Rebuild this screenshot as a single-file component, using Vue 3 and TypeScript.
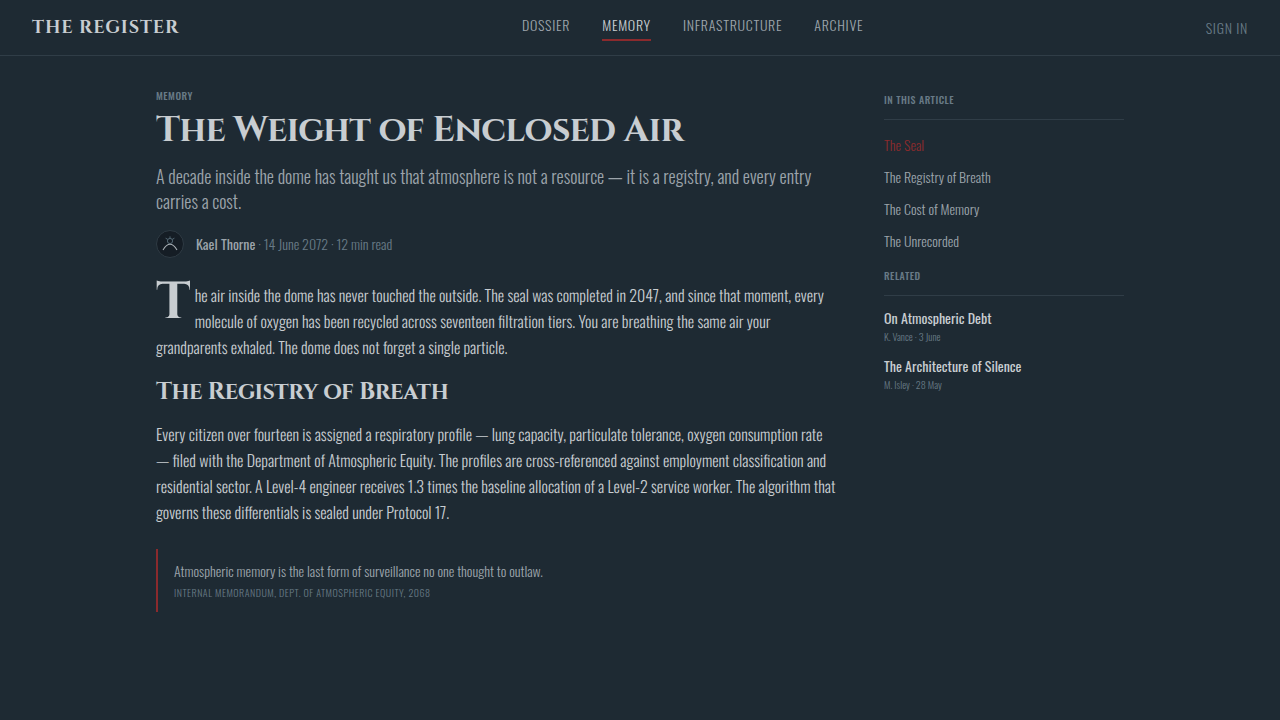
<script setup lang="ts">
import { ref } from 'vue'

interface NavItem { id: string; label: string }
interface RelatedItem { title: string; meta: string }

const navItems: NavItem[] = [
  { id: 'dossier', label: 'Dossier' },
  { id: 'memory', label: 'Memory' },
  { id: 'infrastructure', label: 'Infrastructure' },
  { id: 'archive', label: 'Archive' },
]
const sections: NavItem[] = [
  { id: 'seal', label: 'The Seal' },
  { id: 'registry', label: 'The Registry of Breath' },
  { id: 'cost', label: 'The Cost of Memory' },
  { id: 'unrecorded', label: 'The Unrecorded' },
]
const related: RelatedItem[] = [
  { title: 'On Atmospheric Debt', meta: 'K. Vance · 3 June' },
  { title: 'The Architecture of Silence', meta: 'M. Isley · 28 May' },
]
const activeNav = ref('memory')
const activeSection = ref('seal')
</script>

<template>
  <div class="page">
    <header class="topbar">
      <a class="brand" href="#">THE REGISTER</a>
      <nav class="nav" aria-label="Main">
        <a
          v-for="item in navItems"
          :key="item.id"
          :href="`#${item.id}`"
          class="nav-link"
          :class="{ active: item.id === activeNav }"
          @click="activeNav = item.id"
        >{{ item.label }}</a>
      </nav>
      <button type="button" class="sign-in">Sign in</button>
    </header>

    <div class="layout">
      <main class="article">
        <p class="eyebrow">Memory</p>
        <h1 class="title">The Weight of Enclosed Air</h1>
        <p class="deck">A decade inside the dome has taught us that atmosphere is not a resource — it is a registry, and every entry carries a cost.</p>
        <div class="byline">
          <svg class="avatar" viewBox="0 0 28 28" aria-hidden="true">
            <circle cx="14" cy="14" r="13.5" fill="#151d25" stroke="#2f3b44" />
            <g fill="none" stroke="#526672" stroke-width="1">
              <circle cx="14" cy="11" r="2.6" />
              <path d="M14 8.4V6.4M11.8 9.4L9.6 8.2M16.2 9.4L18.4 8.2" />
            </g>
            <path d="M7 20Q14 8.6 21 20" fill="none" stroke="#a9b0b5" stroke-width="1.1" />
          </svg>
          <p class="meta"><strong>Kael Thorne</strong> · 14 June 2072 · 12 min read</p>
        </div>
        <p class="body lead" id="seal">The air inside the dome has never touched the outside. The seal was completed in 2047, and since that moment, every molecule of oxygen has been recycled across seventeen filtration tiers. You are breathing the same air your grandparents exhaled. The dome does not forget a single particle.</p>
        <h2 class="subtitle" id="registry">The Registry of Breath</h2>
        <p class="body">Every citizen over fourteen is assigned a respiratory profile — lung capacity, particulate tolerance, oxygen consumption rate — filed with the Department of Atmospheric Equity. The profiles are cross-referenced against employment classification and residential sector. A Level-4 engineer receives 1.3 times the baseline allocation of a Level-2 service worker. The algorithm that governs these differentials is sealed under Protocol 17.</p>
        <blockquote class="quote">
          <p class="quote-text">Atmospheric memory is the last form of surveillance no one thought to outlaw.</p>
          <cite class="quote-source">Internal Memorandum, Dept. of Atmospheric Equity, 2068</cite>
        </blockquote>
      </main>

      <aside class="sidebar">
        <nav aria-labelledby="toc-heading">
          <h3 id="toc-heading" class="side-heading">In this article</h3>
          <ul class="toc">
            <li v-for="section in sections" :key="section.id">
              <a
                :href="`#${section.id}`"
                class="toc-link"
                :class="{ active: section.id === activeSection }"
                @click="activeSection = section.id"
              >{{ section.label }}</a>
            </li>
          </ul>
        </nav>
        <section aria-labelledby="related-heading">
          <h3 id="related-heading" class="side-heading">Related</h3>
          <ul class="related">
            <li v-for="item in related" :key="item.title">
              <a href="#" class="related-title">{{ item.title }}</a>
              <p class="related-meta">{{ item.meta }}</p>
            </li>
          </ul>
        </section>
      </aside>
    </div>
  </div>
</template>

<style>
body { margin: 0; background: #1e2a33; }
</style>

<style scoped>
.page {
  --sans: Oswald, "Liberation Sans Narrow", "Roboto Condensed", "Liberation Sans", sans-serif;
  --serif: Cinzel, "Liberation Serif", serif;
  --bright: #c8cdd1;
  --soft: #9ca4ab;
  --muted: #687a86;
  --line: #303d47;
  --accent: #8b2a2d;
  min-height: 100vh;
  background: #1e2a33;
  color: var(--bright);
  font-family: var(--sans);
  font-weight: 300;
  font-size: 16px;
}
p, h1, h2, h3, ul, blockquote { margin: 0; padding: 0; }
ul { list-style: none; }
a { color: inherit; text-decoration: none; }
.topbar {
  display: flex;
  justify-content: space-between;
  align-items: center;
  height: 55px;
  padding: 0 32px;
  border-bottom: 1px solid var(--line);
}
.brand { font-family: var(--serif); font-size: 18px; font-weight: 600; letter-spacing: 0.05em; }
.nav { display: flex; gap: 32px; }
.nav-link {
  padding-bottom: 4px;
  border-bottom: 2px solid transparent;
  color: var(--soft);
  font-size: 14px;
  line-height: 21px;
  letter-spacing: 0.05em;
  text-transform: uppercase;
}
.nav-link.active { color: var(--bright); border-color: var(--accent); }
.sign-in {
  padding: 0;
  border: 0;
  background: none;
  color: var(--muted);
  font: inherit;
  font-size: 14px;
  letter-spacing: 0.05em;
  text-transform: uppercase;
  cursor: pointer;
}
.layout {
  display: grid;
  grid-template-columns: minmax(0, 680px) 240px;
  gap: 48px;
  justify-content: center;
  padding: 32px;
}
.eyebrow, .side-heading {
  color: var(--muted);
  font-size: 10px;
  font-weight: 500;
  line-height: 16px;
  letter-spacing: 0.05em;
  text-transform: uppercase;
}
.title { margin-top: 2px; font-family: var(--serif); font-size: 36px; font-weight: 700; line-height: 48px; letter-spacing: -0.02em; }
.deck { margin-top: 10px; color: var(--soft); font-size: 18px; line-height: 25px; }
.byline { display: flex; align-items: center; gap: 12px; margin-top: 16px; }
.avatar { width: 28px; height: 28px; }
.meta { color: var(--muted); font-size: 14px; line-height: 20px; }
.meta strong { color: var(--soft); font-weight: 400; }
.body { line-height: 26px; text-rendering: geometricPrecision; }
.lead { margin-top: 24px; }
.lead::first-letter {
  float: left;
  margin-right: 4px;
  font-family: var(--serif);
  font-size: 52px;
  font-weight: 600;
  line-height: 42px;
}
.subtitle { margin: 16px 0 13px; font-family: var(--serif); font-size: 24px; font-weight: 600; line-height: 32px; letter-spacing: -0.02em; }
.quote { margin-top: 24px; padding: 12px 16px; border-left: 2px solid var(--accent); }
.quote-text { color: var(--soft); font-size: 14px; line-height: 20px; }
.quote-source { display: block; margin-top: 4px; color: var(--muted); font-size: 10px; font-style: normal; line-height: 15px; letter-spacing: 0.05em; text-transform: uppercase; }
.sidebar { padding-top: 4px; }
.side-heading { padding-bottom: 11px; border-bottom: 1px solid var(--line); }
.toc { padding: 9px 0 11px; }
.toc-link { display: block; color: var(--soft); font-size: 14px; line-height: 32px; }
.toc-link.active { color: var(--accent); }
.related { display: grid; gap: 10px; padding-top: 11px; }
.related-title { display: block; font-size: 14px; font-weight: 400; line-height: 22px; }
.related-meta { color: var(--muted); font-size: 10px; line-height: 16px; }
</style>
